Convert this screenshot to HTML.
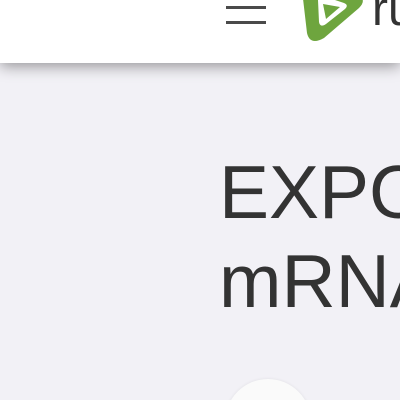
<!DOCTYPE html>
<html><head><style>
html,body{margin:0;padding:0;width:400px;height:400px;overflow:hidden;background:#f2f1f6;font-family:"Liberation Sans",sans-serif}
.wrap{position:relative;width:400px;height:400px;overflow:hidden}
.hdr{position:absolute;left:0;top:0;width:400px;height:63px;background:#fff;box-shadow:0 3px 14px rgba(0,0,0,.4)}
.bar{position:absolute;left:226px;width:40px;height:3px;background:#4a4a4a}
.t{position:absolute;left:219px;font-size:75px;color:#333;line-height:89px;white-space:nowrap}
.cbox{position:absolute;left:222px;top:376px;width:92px;height:24px;overflow:hidden}
.circ{position:absolute;left:3px;top:3px;width:86px;height:86px;border-radius:50%;background:#fafafa;box-shadow:0 0 3px rgba(0,0,0,.08)}
</style></head><body><div class="wrap">
<div class="t" style="top:148px">EXPO<br>mRNA</div>
<div class="cbox"><div class="circ"></div></div>
<div class="hdr">
<div class="bar" style="top:6px"></div>
<div class="bar" style="top:21px"></div>
<svg style="position:absolute;left:298px;top:-22px" width="70" height="64" viewBox="0 0 70 64">
<path fill-rule="evenodd" fill="#6ea53e" d="M4 12 Q3 2 14 4 L58 16 Q70 21 61 30 L26 60 Q12 68 9 55 Z M20 22 Q19 16 25 18 L46 25 Q51 27 47 31 L28 46 Q22 50 21 44 Z"/>
<path d="M25 26 L42 29 L28 41 Z" fill="#6ea53e"/>
</svg>
<div style="position:absolute;left:372px;top:-18px;font-size:48px;color:#333">ru</div>
</div>
</div></body></html>
